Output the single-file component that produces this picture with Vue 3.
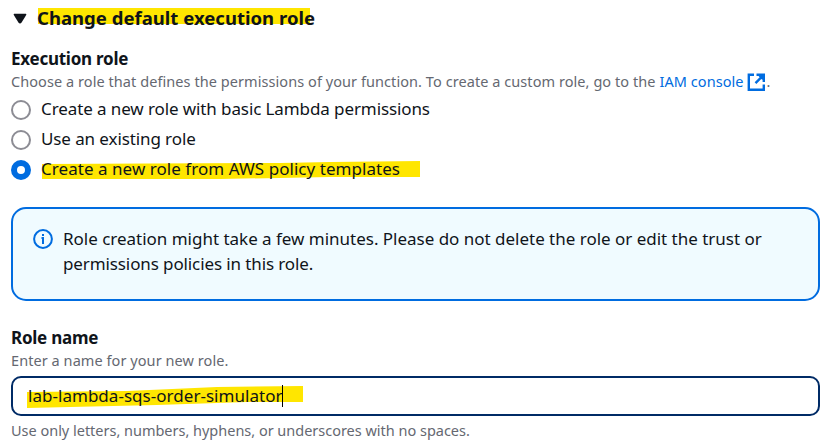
<script setup>
import { ref } from 'vue'

const options = [
  { id: 'basic', label: 'Create a new role with basic Lambda permissions' },
  { id: 'existing', label: 'Use an existing role' },
  { id: 'template', label: 'Create a new role from AWS policy templates', marked: true },
]
const selected = ref('template')
</script>

<template>
  <main class="panel">
    <header class="expander">
      <svg class="caret" width="14" height="12" viewBox="0 0 14 12"><path d="M1.200 0.800H12.800Q13.800 1 13.200 2L8.600 9.600Q7 11.600 5.400 9.600L0.800 2Q0.200 1 1.200 0.800Z" /></svg>
      <h3 class="marked title">
        <svg class="ink" width="280" height="24" viewBox="0 0 280 24"><path d="M1 1H273V17H1Z" /></svg>
        <span class="txt">Change default execution role</span>
      </h3>
    </header>

    <section class="field role">
      <div class="label exec">Execution role</div>
      <div class="desc"><span class="choose">Choose a role that defines the permissions of your function. To create a custom role, go to the </span><a class="link">IAM console<svg class="ext" width="19" height="19" viewBox="0 0 19 19"><path d="M7 1.800H1.800V16.800H16.800V11.500M9.500 1.800H16.800V9M16.200 2.400L8.500 10.100M12.500 2.500L16 6" /></svg></a>.</div>
      <div class="options">
        <label v-for="o in options" :key="o.id" class="option" @click="selected = o.id">
          <span class="radio" :class="{ on: selected === o.id }"></span>
          <span class="marked" :class="o.id">
            <svg v-if="o.marked" class="ink" width="382" height="24" viewBox="0 0 382 24"><path d="M2 7L240 6L290 5L380 4V20L290 20L180 22H2Z" /></svg>
            <span class="txt">{{ o.label }}</span>
          </span>
        </label>
      </div>
    </section>

    <aside class="alert">
      <svg class="info" width="20" height="20" viewBox="0 0 20 20">
        <circle cx="10" cy="10" r="8.900" />
        <path d="M8.500 9H10V15M10 5V7" />
      </svg>
      <p><span class="a1">Role creation might take a few minutes. Please do not delete the role or edit the trust or</span><br /><span class="a2">permissions policies in this role.</span></p>
    </aside>

    <section class="field">
      <div class="label name">Role name</div>
      <div class="desc enter">Enter a name for your new role.</div>
      <div class="input">
        <span class="marked value">
          <svg class="ink" width="280" height="26" viewBox="0 0 280 26"><path d="M0 8L100 7L190 3L276 2V18H220L130 21L0 24Z" /></svg>
          <span class="txt">lab-lambda-sqs-order-simulator</span><i class="cursor"></i>
        </span>
      </div>
      <div class="desc hint">Use only letters, numbers, hyphens, or underscores with no spaces.</div>
    </section>
  </main>
</template>

<style>
body { margin: 0; background: #fff; }
</style>

<style scoped>
.panel {
  box-sizing: border-box;
  width: 826px;
  height: 447px;
  padding: 5px 6px 0 11px;
  overflow: hidden;
  font-family: "Noto Sans", "Open Sans", sans-serif;
  font-size: 17px;
  color: #0f141a;
  white-space: nowrap;
}
.expander { display: flex; align-items: center; height: 26px; padding-left: 2px; }
.caret { fill: #0f141a; margin-right: 10px; margin-top: 2px; }
.marked { position: relative; display: inline-block; }
.ink { position: absolute; left: -1px; top: 0; fill: #ffe600; }
.txt { position: relative; }
.title { margin: 0; height: 26px; font-size: 18.500px; line-height: 26px; font-weight: 700; letter-spacing: 0.02px; }
.title .ink { left: 0; top: 2px; }
.role { margin-top: 17px; }
.label { height: 22px; font-size: 17px; line-height: 22px; font-weight: 700; letter-spacing: -0.250px; }
.desc { height: 24px; font-size: 14.500px; line-height: 22px; color: #656871; letter-spacing: 0.065px; }
.link { color: #006ce0; }
.ext { margin: -3px 1px 0 3px; vertical-align: -5px; fill: none; stroke: #006ce0; stroke-width: 2.400; }
.options { display: flex; flex-direction: column; margin-top: 1px; }
.option { display: flex; align-items: center; height: 30px; line-height: 24px; }
.option .marked { margin-top: -2px; height: 24px; letter-spacing: -0.1px; }
.option .template { letter-spacing: 0.045px; }
.radio { box-sizing: border-box; width: 20px; height: 20px; margin-right: 10px; border: 2px solid #8c8c94; border-radius: 50%; }
.radio.on { border: 6px solid #006ce0; }
.alert {
  box-sizing: border-box;
  display: flex;
  height: 94px;
  margin-top: 22px;
  padding: 17px 20px 18px;
  border: 2px solid #006ce0;
  border-radius: 15px;
  background: #f0fbff;
}
.info { margin: 3px 10px 0 0; fill: none; stroke: #006ce0; stroke-width: 2; }
.alert p { margin: 0; line-height: 25px; }
.a1 { letter-spacing: -0.016px; }
.a2 { letter-spacing: -0.110px; }
.field .name { margin-top: 26px; }
.enter { height: 27px; }
.input {
  box-sizing: border-box;
  height: 40px;
  padding: 6px 15px;
  border: 2px solid #002b66;
  border-radius: 10px;
}
.value { height: 24px; line-height: 24px; letter-spacing: 0.03px; }
.cursor { position: absolute; right: 0; top: 1px; width: 1px; height: 22px; background: #000; }
.hint { line-height: 29px; letter-spacing: -0.015px; }
</style>
